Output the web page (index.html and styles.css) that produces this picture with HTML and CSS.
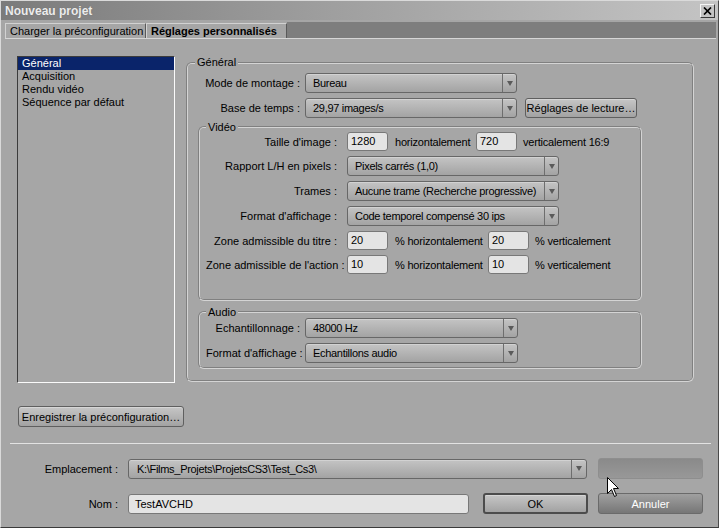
FILE: index.html
```html
<!DOCTYPE html>
<html lang="fr">
<head>
<meta charset="utf-8">
<title>Nouveau projet</title>
<link rel="stylesheet" href="styles.css">
</head>
<body>
<div class="window">
  <div class="titlebar">
    <span class="title">Nouveau projet</span>
    <span class="close"><svg width="9" height="8" viewBox="0 0 9 8"><path d="M1 0.5 L8 7.5 M8 0.5 L1 7.5" stroke="#000" stroke-width="1.7" fill="none"/></svg></span>
  </div>
  <div class="tabs">
    <div class="tab tab-load">Charger la préconfiguration</div>
    <div class="tab tab-custom">Réglages personnalisés</div>
    <div class="tab-fill"></div>
  </div>
  <div class="main">
    <ul class="list">
      <li class="sel">Général</li>
      <li>Acquisition</li>
      <li>Rendu vidéo</li>
      <li>Séquence par défaut</li>
    </ul>
    <fieldset class="group g-general">
      <legend>Général</legend>
      <div class="row r-first">
        <label class="lbl lbl-gen">Mode de montage :</label>
        <div class="select s-gen"><span class="val">Bureau</span><span class="arrow"></span></div>
      </div>
      <div class="row">
        <label class="lbl lbl-gen">Base de temps :</label>
        <div class="select s-gen"><span class="val">29,97 images/s</span><span class="arrow"></span></div>
        <button class="btn b-lecture">Réglages de lecture…</button>
      </div>
      <fieldset class="group g-video">
        <legend>Vidéo</legend>
        <div class="vrow v-in v-first">
          <label class="lbl lbl-vid">Taille d'image :</label>
          <span class="input i-num">1280</span>
          <span class="txt t-h">horizontalement</span>
          <span class="input i-num">720</span>
          <span class="txt t-v">verticalement 16:9</span>
        </div>
        <div class="vrow">
          <label class="lbl lbl-vid">Rapport L/H en pixels :</label>
          <div class="select s-vid"><span class="val">Pixels carrés (1,0)</span><span class="arrow"></span></div>
        </div>
        <div class="vrow">
          <label class="lbl lbl-vid">Trames :</label>
          <div class="select s-vid"><span class="val">Aucune trame (Recherche progressive)</span><span class="arrow"></span></div>
        </div>
        <div class="vrow">
          <label class="lbl lbl-vid">Format d'affichage :</label>
          <div class="select s-vid"><span class="val">Code temporel compensé 30 ips</span><span class="arrow"></span></div>
        </div>
        <div class="vrow v-in">
          <label class="lbl lbl-vid">Zone admissible du titre :</label>
          <span class="input i-num">20</span>
          <span class="txt t-ph">% horizontalement</span>
          <span class="input i-num">20</span>
          <span class="txt t-v">% verticalement</span>
        </div>
        <div class="vrow v-in">
          <label class="lbl lbl-vid">Zone admissible de l'action :</label>
          <span class="input i-num">10</span>
          <span class="txt t-ph">% horizontalement</span>
          <span class="input i-num">10</span>
          <span class="txt t-v">% verticalement</span>
        </div>
      </fieldset>
      <fieldset class="group g-audio">
        <legend>Audio</legend>
        <div class="row a-first">
          <label class="lbl lbl-aud">Echantillonnage :</label>
          <div class="select s-aud"><span class="val">48000 Hz</span><span class="arrow"></span></div>
        </div>
        <div class="row">
          <label class="lbl lbl-aud">Format d'affichage :</label>
          <div class="select s-aud"><span class="val">Echantillons audio</span><span class="arrow"></span></div>
        </div>
      </fieldset>
    </fieldset>
  </div>
  <div class="save">
    <button class="btn b-save">Enregistrer la préconfiguration…</button>
  </div>
  <div class="sep"></div>
  <div class="frow">
    <label class="lbl lbl-foot">Emplacement :</label>
    <div class="select s-loc"><span class="val">K:\Films_Projets\ProjetsCS3\Test_Cs3\</span><span class="arrow"></span></div>
    <div class="blank"></div>
  </div>
  <div class="frow frow2">
    <label class="lbl lbl-foot">Nom :</label>
    <span class="input i-name">TestAVCHD</span>
    <button class="btn b-ok">OK</button>
    <button class="btn b-cancel">Annuler</button>
  </div>
  <svg class="cursor" width="13" height="21" viewBox="0 0 13 21"><path d="M0.5 0.5 V16.5 L4.5 12.5 L7.5 19.5 L9.5 18.5 L6.5 11.5 H11.5 Z" fill="#fff" stroke="#000" stroke-width="1"/></svg>
</div>
</body>
</html>
```
FILE: styles.css
```css
* { box-sizing: border-box; }
html, body { margin: 0; padding: 0; }
body {
  width: 719px;
  height: 528px;
  overflow: hidden;
  background: #a6a6a6;
  font-family: "Liberation Sans", Arial, sans-serif;
  font-size: 11px;
  color: #000;
}
.window {
  position: relative;
  width: 719px;
  height: 528px;
  border: 1px solid;
  border-color: #dadada #4a4a4a #3a3a3a #dadada;
  background: #a6a6a6;
}
.titlebar {
  height: 19px;
  display: flex;
  align-items: center;
  justify-content: space-between;
  padding: 0 3px 0 4px;
  background: linear-gradient(to right, #7b7b7b 0%, #9e9e9e 45%, #c4c4c4 100%);
}
.title {
  font-weight: bold;
  font-size: 12px;
  color: #ececec;
  text-shadow: 0 0 1px #666;
}
.close {
  width: 15px;
  height: 14px;
  background: #c4c4c4;
  border: 1px solid;
  border-color: #f4f4f4 #3a3a3a #3a3a3a #f4f4f4;
  display: flex;
  align-items: center;
  justify-content: center;
}
.tabs {
  display: flex;
  height: 17px;
  margin: 2px 2px 0 4px;
  border-bottom: 1px solid #d6d6d6;
}
.tab {
  height: 15px;
  margin-top: 1px;
  line-height: 14px;
  background: #a6a6a6;
  border-top: 1px solid #d2d2d2;
  border-left: 1px solid #d2d2d2;
  border-right: 1px solid #5a5a5a;
  white-space: nowrap;
}
.tab-load { width: 141px; padding-left: 4px; }
.tab-custom { width: 141px; padding-left: 4px; font-weight: bold; }
.tab-fill { flex: 1; background: #7e7e7e; }

.main {
  display: flex;
  align-items: flex-start;
  margin-top: 17px;
  padding-left: 16px;
}
.list {
  list-style: none;
  margin: 0;
  padding: 0;
  width: 158px;
  height: 327px;
  border: 1px solid;
  border-color: #3c3c3c #fafafa #fafafa #3c3c3c;
  flex: none;
}
.list li {
  height: 13px;
  line-height: 13px;
  padding-left: 4px;
  white-space: nowrap;
}
.list li.sel { background: #0a246a; color: #fff; }

.group {
  margin: 0;
  min-width: 0;
  border: 2px groove #d4d4d4;
  border-radius: 6px;
  padding: 0 0 0 7px;
}
.group > legend { padding: 0 2px; font-size: 11px; }
.g-general { margin-left: 11px; width: 508px; height: 326px; flex: none; }
.g-general > legend { line-height: 13px; }
.g-video { margin: 4px 0 0 3px; width: 444px; height: 179px; padding-left: 6px; }
.g-audio { margin: 6px 0 0 3px; width: 444px; height: 62px; padding-left: 6px; }
.g-video > legend, .g-audio > legend { line-height: 10px; }

.row { display: flex; align-items: center; height: 20px; margin-top: 5px; }
.r-first { margin-top: 4px; }
.a-first { margin-top: 1px; }
.vrow { display: flex; align-items: center; height: 20px; margin-top: 5px; }
.vrow.v-in { height: 19px; }
.v-first { margin-top: 0; }

.lbl { text-align: right; white-space: nowrap; flex: none; display: block; }
.lbl-gen { width: 105px; margin-right: 5px; }
.lbl-vid { width: 131px; margin-right: 10px; }
.lbl-aud { width: 94px; margin-right: 5px; }
.lbl-foot { width: 108px; margin-right: 10px; }

.select {
  display: flex;
  height: 20px;
  border: 1px solid #676767;
  border-radius: 3px;
  background: linear-gradient(#c4c4c4, #a3a3a3);
  box-shadow: inset 0 1px 0 #d2d2d2;
  flex: none;
}
.select .val {
  flex: 1;
  padding-left: 7px;
  line-height: 18px;
  white-space: nowrap;
  overflow: hidden;
  letter-spacing: -0.3px;
}
.select .arrow {
  width: 14px;
  border-left: 1px solid #6e6e6e;
  display: flex;
  align-items: center;
  justify-content: center;
}
.select .arrow::after {
  content: "";
  border-left: 3px solid transparent;
  border-right: 3px solid transparent;
  border-top: 5px solid #5a5a5a;
}
.s-gen { width: 212px; }
.s-vid { width: 212px; }
.s-aud { width: 213px; }
.s-loc { width: 459px; }
.s-loc .arrow { width: 15px; }
.s-loc .val { padding-left: 8px; }

.input {
  height: 19px;
  border: 1px solid #787878;
  border-radius: 3px;
  background: #e4e4e4;
  padding-left: 3px;
  line-height: 17px;
  flex: none;
  white-space: nowrap;
}
.i-num { width: 41px; }
.txt { white-space: nowrap; flex: none; letter-spacing: -0.2px; }
.t-h { margin-left: 7px; width: 81px; }
.t-ph { margin-left: 7px; width: 93px; }
.t-v { margin-left: 6px; }

.btn {
  font-family: inherit;
  font-size: 11px;
  color: #000;
  height: 20px;
  padding: 0;
  border: 1px solid #5f5f5f;
  border-radius: 3px;
  background: linear-gradient(#c6c6c6, #a2a2a2);
  box-shadow: inset 0 1px 0 #d6d6d6;
  flex: none;
  white-space: nowrap;
}
.b-lecture { width: 112px; margin-left: 8px; }

.save { margin: 23px 0 0 17px; }
.b-save { width: 166px; height: 21px; }

.sep { height: 1px; background: #e2e2e2; margin: 16px 0 0 9px; width: 701px; }

.frow { display: flex; align-items: center; margin: 14px 0 0 9px; }
.frow2 { margin-top: 14px; }
.blank {
  width: 105px;
  height: 21px;
  margin-left: 11px;
  border-radius: 3px;
  background: linear-gradient(#8a8a8a, #989898);
  border: 1px solid #8e8e8e;
}
.i-name { width: 341px; height: 20px; padding-left: 6px; line-height: 18px; }
.b-ok { width: 105px; height: 21px; margin-left: 14px; border: 2px solid #4c4c4c; }
.b-cancel {
  width: 105px;
  height: 21px;
  margin-left: 10px;
  color: #fff;
  background: linear-gradient(#a0a0a0, #767676);
  border-color: #6a6a6a;
  box-shadow: none;
}
.cursor { position: absolute; left: 606px; top: 476px; }
```
